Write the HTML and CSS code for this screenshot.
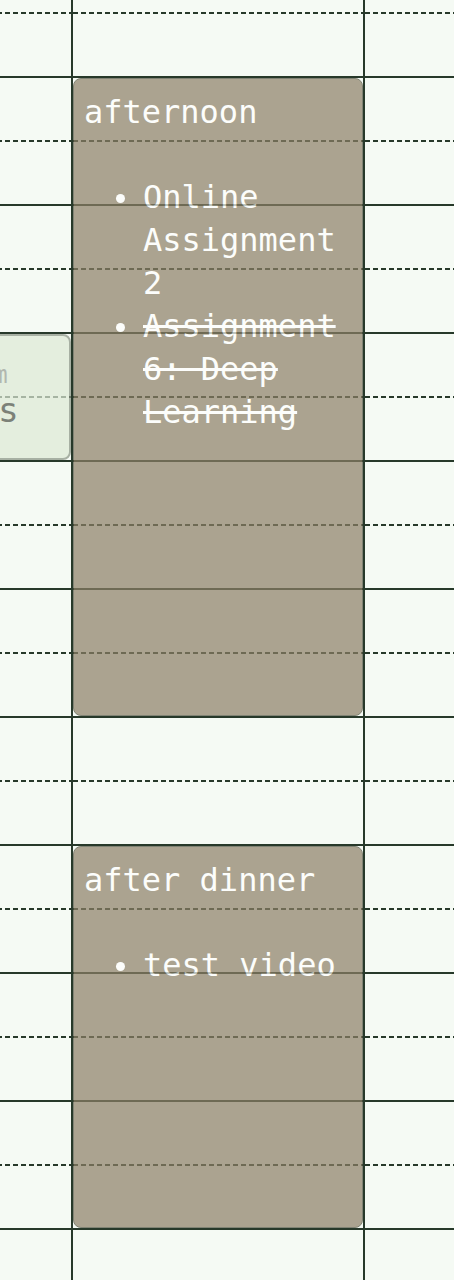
FILE: index.html
```html
<!DOCTYPE html>
<html lang="en">
<head>
<meta charset="utf-8">
<title>Planner</title>
<link rel="stylesheet" href="styles.css">
</head>
<body>
<main class="calendar">
  <section class="day">
    <article class="event event--light" style="grid-row: 7 / span 2">
      <p class="event__time">10:00am-11:00am</p>
      <h2 class="event__title">study notes</h2>
    </article>
  </section>
  <section class="day">
    <article class="event" style="grid-row: 3 / span 10">
      <h2 class="event__title">afternoon</h2>
      <ul class="event__tasks">
        <li>Online Assignment 2</li>
        <li class="is-done">Assignment 6: Deep Learning</li>
      </ul>
    </article>
    <article class="event" style="grid-row: 15 / span 6">
      <h2 class="event__title">after dinner</h2>
      <ul class="event__tasks">
        <li>test video</li>
      </ul>
    </article>
  </section>
  <section class="day"></section>
</main>
</body>
</html>
```
FILE: styles.css
```css
* { box-sizing: border-box; }

html, body {
  margin: 0;
  height: 100%;
  overflow: hidden;
  background: #f5faf4;
}

.calendar {
  display: flex;
  margin: -52px 0 0 -221px;
  font-family: "DejaVu Sans Mono", monospace;
}

.day {
  flex: 0 0 292px;
  height: 1344px;
  border-left: 2px solid #27392a;
  display: grid;
  grid-template-columns: 100%;
  grid-template-rows: repeat(21, 64px);
  background:
    conic-gradient(at 5px 2px, transparent 0deg 270deg, #27392a 270deg 360deg) 0 64px / 8px 128px,
    linear-gradient(#27392a 2px, transparent 2px) 0 0 / 100% 128px;
}

.event {
  grid-column: 1;
  min-width: 0;
  margin-top: 2px;
  padding: 12px 8px 12px 10px;
  border: 1px solid rgb(80, 82, 62);
  border-radius: 8px;
  background: rgb(141, 127, 103);
  color: #fff;
  opacity: 0.7;
  overflow: hidden;
}

.event__title {
  margin: 0;
  font-size: 32px;
  line-height: 43px;
  font-weight: normal;
  white-space: nowrap;
}

.event__tasks {
  margin: 42px 0 0;
  padding: 0 0 0 59px;
  list-style: none;
  font-size: 32px;
  line-height: 43px;
}

.event__tasks li {
  position: relative;
}

.event__tasks li::before {
  content: "";
  position: absolute;
  left: -27px;
  top: 18px;
  width: 9px;
  height: 9px;
  border-radius: 50%;
  background: #fff;
}

.is-done {
  text-decoration: line-through;
}

.event--light {
  padding: 25px 8px 8px;
  border: 2px solid rgb(135, 145, 130);
  background: rgb(221, 233, 214);
}

.event__time {
  margin: 0;
  font-size: 24px;
  line-height: 28px;
  color: rgb(150, 156, 147);
  white-space: nowrap;
}

.event--light .event__title {
  margin-top: 1px;
  font-size: 34.4px;
  line-height: 40px;
  color: rgb(74, 79, 69);
}
```
